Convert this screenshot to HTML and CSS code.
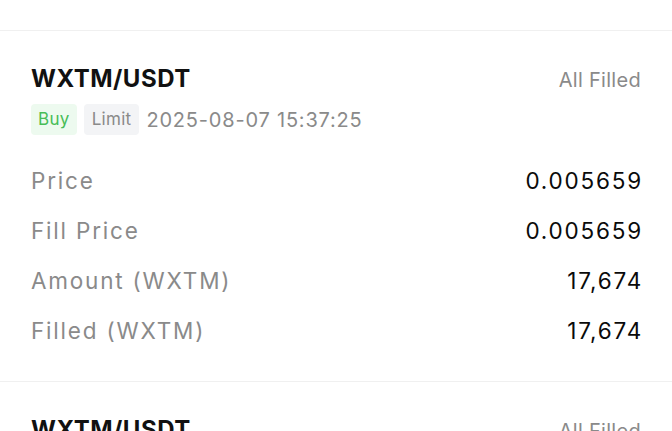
FILE: index.html
```html
<!DOCTYPE html>
<html lang="en">

<head>
    <meta charset="UTF-8" />
    <meta name="viewport" content="width=device-width, initial-scale=1.0" />
    <title>Order History</title>
    <link rel="stylesheet" href="styles.css">
</head>

<body>
    <main class="orders">
        <div class="order-tail"></div>

        <section class="order">
            <div class="order-head">
                <h2 class="pair">WXTM/USDT</h2>
                <span class="status">All Filled</span>
            </div>
            <div class="order-meta">
                <span class="tag tag-buy">Buy</span>
                <span class="tag tag-type">Limit</span>
                <span class="time">2025-08-07 15:37:25</span>
            </div>
            <div class="row"><span class="label">Price</span><span class="value">0.005659</span></div>
            <div class="row"><span class="label">Fill Price</span><span class="value">0.005659</span></div>
            <div class="row"><span class="label">Amount (WXTM)</span><span class="value">17,674</span></div>
            <div class="row"><span class="label">Filled (WXTM)</span><span class="value">17,674</span></div>
        </section>

        <section class="order">
            <div class="order-head">
                <h2 class="pair">WXTM/USDT</h2>
                <span class="status">All Filled</span>
            </div>
        </section>
    </main>
</body>

</html>
```

FILE: styles.css
```css
* {
    box-sizing: border-box;
    margin: 0;
    padding: 0;
}

body {
    background: #fff;
    color: #111;
    font-family: Inter, 'Noto Sans', sans-serif;
    overflow: hidden;
}

.order-tail {
    height: 30px;
}

.order {
    border-top: 1px solid #f0f0f0;
    padding: 30px 31px 25px;
}

.order-head {
    display: flex;
    justify-content: space-between;
    align-items: baseline;
}

.pair {
    font-size: 24px;
    font-weight: 700;
    line-height: 36px;
    letter-spacing: 0.5px;
}

.status {
    font-size: 20px;
    color: #8a8a8a;
    letter-spacing: 0.3px;
}

.order-meta {
    display: flex;
    align-items: center;
    gap: 7px;
    margin-top: 7px;
    margin-bottom: 21px;
}

.tag {
    height: 31px;
    line-height: 31px;
    padding: 0 7px;
    border-radius: 4px;
    font-size: 17px;
    letter-spacing: 0.3px;
}

.tag-buy {
    background: #edfaef;
    color: #47bd57;
}

.tag-type {
    padding: 0 8px;
    background: #f3f4f6;
    color: #8a8a8a;
}

.time {
    font-size: 20px;
    color: #8a8a8a;
    letter-spacing: 0.8px;
}

.row {
    display: flex;
    justify-content: space-between;
    align-items: baseline;
    height: 50px;
    line-height: 50px;
}

.label {
    font-size: 22.5px;
    color: #8a8a8a;
    letter-spacing: 1.8px;
}

.value {
    font-size: 22.5px;
    color: #0a0a0a;
    letter-spacing: 1.8px;
    margin-right: -2px;
}
```
